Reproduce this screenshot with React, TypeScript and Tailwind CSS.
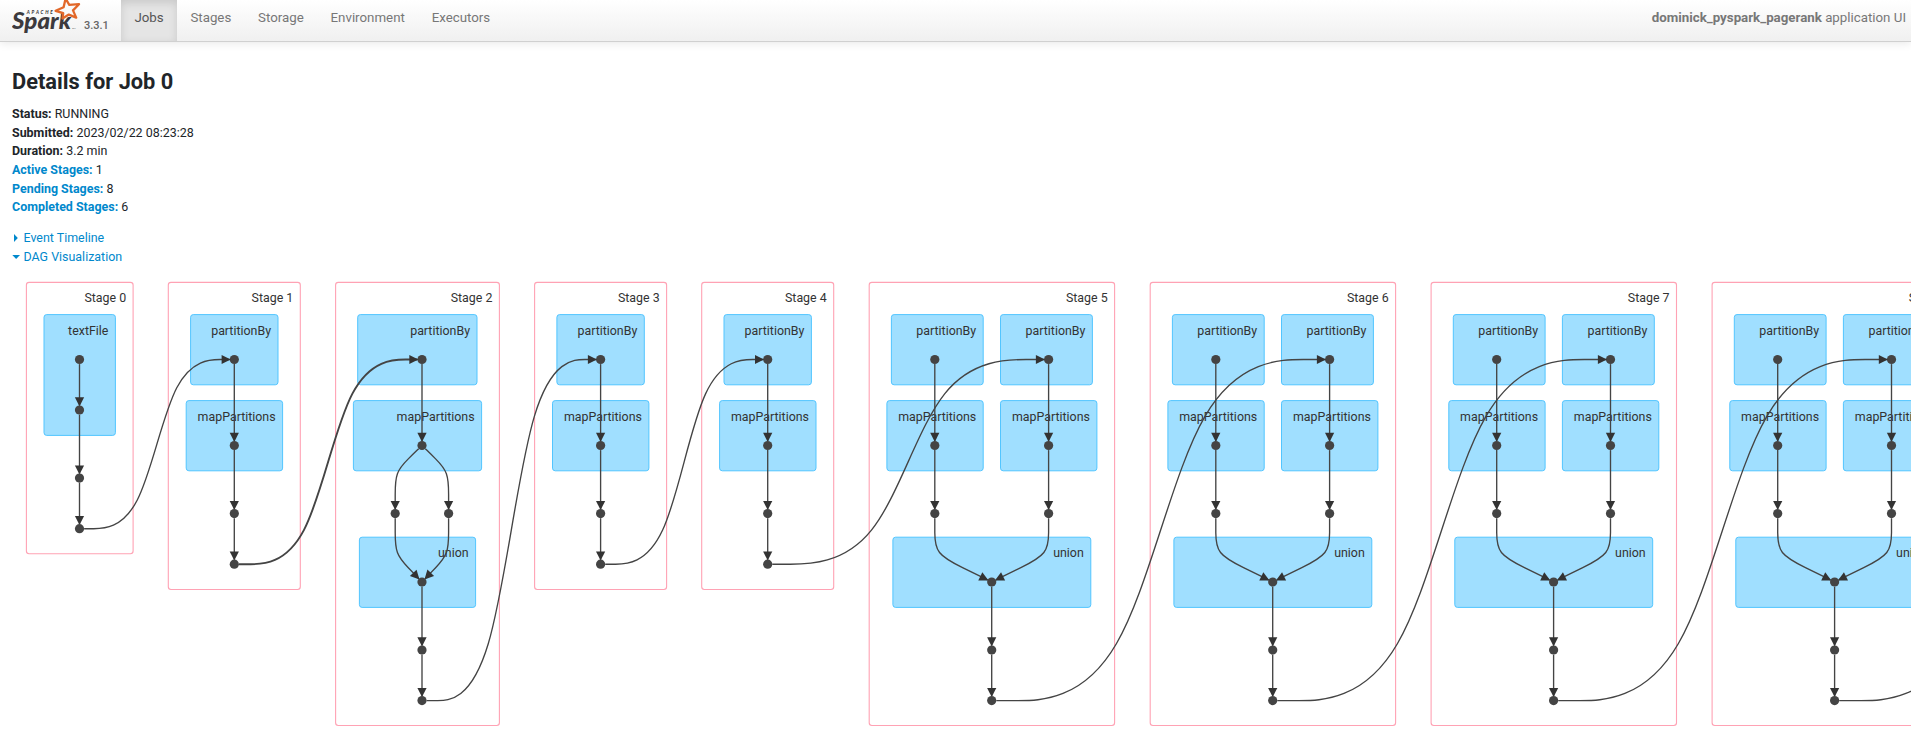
type Pt = [number, number];

/* Open uniform B-spline through a list of control points, as an SVG path. */
function basis(p: Pt[]): string {
  const n = p.length;
  const q = [p[0], ...p, p[n - 1]];
  let d = `M${p[0][0]},${p[0][1]}L${(5 * p[0][0] + p[1][0]) / 6},${(5 * p[0][1] + p[1][1]) / 6}`;
  for (let i = 1; i < n; i++) {
    const a = q[i];
    const b = q[i + 1];
    const c = q[i + 2];
    d += `C${(2 * a[0] + b[0]) / 3},${(2 * a[1] + b[1]) / 3} ${(a[0] + 2 * b[0]) / 3},${(a[1] + 2 * b[1]) / 3} ${(a[0] + 4 * b[0] + c[0]) / 6},${(a[1] + 4 * b[1] + c[1]) / 6}`;
  }
  return `${d}L${p[n - 1][0]},${p[n - 1][1]}`;
}

const R = 4.6;

function Edge({ via = [], from, to, width = 1.35 }: { from: Pt; to: Pt; via?: Pt[]; width?: number }) {
  const next = via[0] ?? to;
  const prev = via[via.length - 1] ?? from;
  const trim = (a: Pt, b: Pt, r: number): Pt => {
    const l = Math.hypot(b[0] - a[0], b[1] - a[1]);
    return [a[0] + ((b[0] - a[0]) * r) / l, a[1] + ((b[1] - a[1]) * r) / l];
  };
  const start = trim(from, next, R);
  const end = trim(to, prev, R);
  const angle = (Math.atan2(to[1] - prev[1], to[0] - prev[0]) * 180) / Math.PI;
  return (
    <g>
      <path d={basis([start, ...via, end])} fill="none" stroke="#444" strokeWidth={width} />
      <path d="M-8.1,-4.6L1,0L-8.1,4.6Z" fill="#333" transform={`translate(${end[0]},${end[1]}) rotate(${angle})`} />
    </g>
  );
}

function Dot({ at }: { at: Pt }) {
  return <circle cx={at[0]} cy={at[1]} r={R} fill="#444" />;
}

function Box({ x1, x2, y1, y2, label, stage = false }: { x1: number; x2: number; y1: number; y2: number; label: string; stage?: boolean }) {
  return (
    <g>
      <rect
        x={x1}
        y={y1}
        width={x2 - x1}
        height={y2 - y1}
        rx={2.7}
        fill={stage ? "#fff" : "#a0dfff"}
        stroke={stage ? "#ffa2b4" : "#52c5ff"}
        strokeWidth={stage ? 1.1 : 1}
      />
      <text x={x2 - 7} y={y1 + 20} textAnchor="end" fill="#333" className="text-[12.4px]">
        {label}
      </text>
    </g>
  );
}

const TOP = 282.4;
const ROW1: [number, number] = [314.6, 384.8];
const ROW2: [number, number] = [400.6, 470.8];
const ROW3: [number, number] = [537.2, 607.4];

function Chain({ points }: { points: Pt[] }) {
  return (
    <g>
      {points.slice(1).map((p, i) => (
        <Edge key={i} from={points[i]} to={p} />
      ))}
      {points.map((p, i) => (
        <Dot key={i} at={p} />
      ))}
    </g>
  );
}

/* Edge that drops straight down, then bends towards a node on the next rank. */
function Merge({ from, to }: { from: Pt; to: Pt }) {
  const dx = to[0] - from[0];
  return (
    <Edge
      from={from}
      via={[
        [from[0], 531],
        [from[0], 554],
        [from[0] + dx * 0.5, 568],
      ]}
      to={to}
    />
  );
}

function SimpleBoxes({ x, n }: { x: number; n: number }) {
  return (
    <g>
      <Box stage x1={x} x2={x + 132} y1={TOP} y2={589.5} label={`Stage ${n}`} />
      <Box x1={x + 22.3} x2={x + 109.7} y1={ROW1[0]} y2={ROW1[1]} label="partitionBy" />
      <Box x1={x + 17.9} x2={x + 114.3} y1={ROW2[0]} y2={ROW2[1]} label="mapPartitions" />
    </g>
  );
}

function SimpleNodes({ x }: { x: number }) {
  const c = x + 66;
  return <Chain points={[[c, 359.5], [c, 445.5], [c, 513.6], [c, 564.2]]} />;
}

function JoinBoxes({ x, n }: { x: number; n: number }) {
  return (
    <g>
      <Box stage x1={x} x2={x + 245.4} y1={TOP} y2={725.5} label={`Stage ${n}`} />
      <Box x1={x + 22.2} x2={x + 114} y1={ROW1[0]} y2={ROW1[1]} label="partitionBy" />
      <Box x1={x + 131.3} x2={x + 223.2} y1={ROW1[0]} y2={ROW1[1]} label="partitionBy" />
      <Box x1={x + 17.7} x2={x + 114} y1={ROW2[0]} y2={ROW2[1]} label="mapPartitions" />
      <Box x1={x + 131.3} x2={x + 227.7} y1={ROW2[0]} y2={ROW2[1]} label="mapPartitions" />
      <Box x1={x + 23.7} x2={x + 221.6} y1={ROW3[0]} y2={ROW3[1]} label="union" />
    </g>
  );
}

function JoinNodes({ x }: { x: number }) {
  const a = x + 65.6;
  const b = x + 179.4;
  const c = x + 122.5;
  return (
    <g>
      <Merge from={[a, 513.6]} to={[c, 582]} />
      <Merge from={[b, 513.6]} to={[c, 582]} />
      <Chain points={[[a, 359.5], [a, 445.5], [a, 513.6]]} />
      <Chain points={[[b, 359.5], [b, 445.5], [b, 513.6]]} />
      <Chain points={[[c, 582], [c, 650], [c, 700.6]]} />
    </g>
  );
}

/* Shuffle edge between two stages: leaves and arrives horizontally. */
function Cross({ from, to, width }: { from: Pt; to: Pt; width?: number }) {
  const w = to[0] - from[0];
  return <Edge from={from} via={[[from[0] + w * 0.4, from[1]], [from[0] + w * 0.6, to[1]]]} to={to} width={width} />;
}

const SIMPLE = [
  { n: 1, x: 168.3 },
  { n: 3, x: 534.6 },
  { n: 4, x: 701.7 },
];
const JOIN = [
  { n: 5, x: 869.2 },
  { n: 6, x: 1150.2 },
  { n: 7, x: 1431.1 },
  { n: 8, x: 1712.1 },
];

function Dag() {
  return (
    <svg width="1911" height="476" viewBox="0 270 1911 476" className="block">
      <Box stage x1={26.4} x2={133.1} y1={TOP} y2={553.7} label="Stage 0" />
      <Box x1={44} x2={115.4} y1={ROW1[0]} y2={435.4} label="textFile" />
      <Box stage x1={335.6} x2={499.4} y1={TOP} y2={725.5} label="Stage 2" />
      <Box x1={357.7} x2={477} y1={ROW1[0]} y2={ROW1[1]} label="partitionBy" />
      <Box x1={353.4} x2={481.6} y1={ROW2[0]} y2={ROW2[1]} label="mapPartitions" />
      <Box x1={359.4} x2={475.6} y1={ROW3[0]} y2={ROW3[1]} label="union" />
      {SIMPLE.map((s) => (
        <SimpleBoxes key={s.n} {...s} />
      ))}
      {JOIN.map((s) => (
        <JoinBoxes key={s.n} {...s} />
      ))}

      <Chain points={[[79.5, 359.5], [79.5, 410], [79.5, 478.1], [79.5, 528.7]]} />
      <Edge from={[422, 445.5]} via={[[408.6, 458.5], [395.2, 472], [395.2, 496]]} to={[395.2, 513.6]} />
      <Edge from={[422, 445.5]} via={[[435.3, 458.5], [448.6, 472], [448.6, 496]]} to={[448.6, 513.6]} />
      <Merge from={[395.2, 513.6]} to={[422, 582]} />
      <Merge from={[448.6, 513.6]} to={[422, 582]} />
      <Dot at={[395.2, 513.6]} />
      <Dot at={[448.6, 513.6]} />
      <Chain points={[[422, 359.5], [422, 445.5]]} />
      <Chain points={[[422, 582], [422, 650], [422, 700.6]]} />
      {SIMPLE.map((s) => (
        <SimpleNodes key={s.n} x={s.x} />
      ))}
      {JOIN.map((s) => (
        <JoinNodes key={s.n} x={s.x} />
      ))}

      <Cross from={[79.5, 528.7]} to={[234.3, 359.5]} />
      <Cross from={[234.3, 564.2]} to={[422, 359.5]} width={1.9} />
      <Cross from={[422, 700.6]} to={[600.6, 359.5]} />
      <Cross from={[600.6, 564.2]} to={[767.7, 359.5]} />
      <Cross from={[767.7, 564.2]} to={[1048.6, 359.5]} />
      {JOIN.map((s) => (
        <Cross key={s.n} from={[s.x + 122.5, 700.6]} to={[s.x + 460.4, 359.5]} />
      ))}
    </svg>
  );
}

function Logo() {
  return (
    <svg width="72" height="36" viewBox="0 0 72 36" className="block shrink-0">
      <g fill="#3c3a3e" fontFamily="Lato, sans-serif" fontStyle="italic">
        <text x="0" y="29" fontSize="22" fontWeight="900" textLength="59" lengthAdjust="spacingAndGlyphs">
          Spark
        </text>
        <text x="14.8" y="14.4" fontSize="4.6" fontWeight="900" textLength="26" lengthAdjust="spacing">
          APACHE
        </text>
        <text x="60" y="29" fontSize="2.5">
          TM
        </text>
      </g>
      <path d="M53.6,-1.5L57.3,4.9L67,4.2L61,10.4L64.2,17.6L56.8,14.6L50.5,18.5L51.2,13.2L43.6,10.8L51.6,7.3Z" fill="#fafafa" stroke="#e2682a" strokeWidth="2.3" strokeLinejoin="round" />
    </svg>
  );
}

const TABS = ["Jobs", "Stages", "Storage", "Environment", "Executors"];

const SUMMARY = [
  { k: "Status:", v: "RUNNING" },
  { k: "Submitted:", v: "2023/02/22 08:23:28" },
  { k: "Duration:", v: "3.2 min" },
  { k: "Active Stages:", v: "1", link: true },
  { k: "Pending Stages:", v: "8", link: true },
  { k: "Completed Stages:", v: "6", link: true },
];

export default function App() {
  return (
    <div className="h-[746px] w-[1911px] overflow-hidden bg-white font-['Roboto',sans-serif] text-[12.45px] leading-[18.65px] text-[#212529]">
      <header className="flex h-[42px] items-start border-b border-[#d0d0d0] bg-linear-to-b from-white to-[#f0f0f0] pl-3 shadow-[0_1px_9px_rgba(0,0,0,0.1)]">
        <Logo />
        <span className="w-[37px] pt-[17px] text-[11px] font-medium text-[#666]">3.3.1</span>
        <nav className="flex h-[41px] text-[13.3px]">
          {TABS.map((t, i) => (
            <a
              key={t}
              className={
                i === 0
                  ? "bg-[#e5e5e5] px-[13.4px] pt-[9px] text-[#555] shadow-[inset_0_3px_8px_rgba(0,0,0,0.125)]"
                  : "px-[13.4px] pt-[9px] text-[#777]"
              }
            >
              {t}
            </a>
          ))}
        </nav>
        <p className="ml-auto pt-[9px] pr-[5px] text-[13.3px] text-[#777]">
          <strong className="font-bold">dominick_pyspark_pagerank</strong> application UI
        </p>
      </header>
      <main>
        <section className="h-[228px] pl-3 pt-[27px]">
          <h3 className="text-[21.8px] leading-[26px] font-bold">Details for Job 0</h3>
          <ul className="mt-[10px]">
            {SUMMARY.map((s) => (
              <li key={s.k}>
                <strong className={s.link ? "font-bold text-[#0088cc]" : "font-bold"}>{s.k}</strong> {s.v}
              </li>
            ))}
          </ul>
          <div className="mt-[12px] text-[#0088cc]">
            <div className="flex items-center">
              <svg width="11.5" height="10" viewBox="0 0 11.5 10">
                <path d="M2,1L5.8,5L2,9Z" fill="#0088cc" />
              </svg>
              Event Timeline
            </div>
            <div className="flex items-center">
              <svg width="11.5" height="10" viewBox="0 0 11.5 10">
                <path d="M0.3,3H8L4.15,7Z" fill="#0088cc" />
              </svg>
              DAG Visualization
            </div>
          </div>
        </section>
        <Dag />
      </main>
    </div>
  );
}
